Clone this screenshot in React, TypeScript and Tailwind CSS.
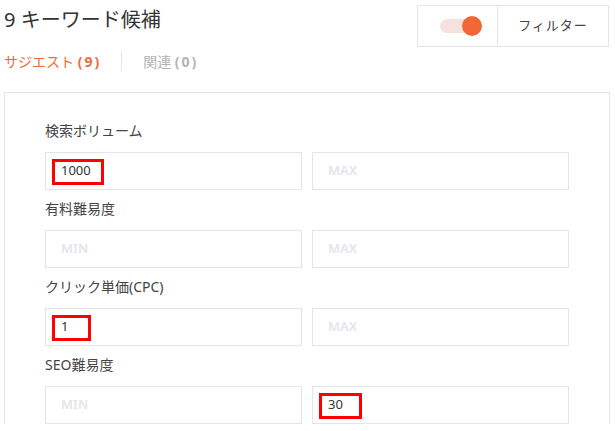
const fields = [
  { label: '検索ボリューム', min: { value: '1000', box: 'w-[52px]' }, max: null },
  { label: '有料難易度', min: null, max: null },
  { label: 'クリック単価(CPC)', min: { value: '1', box: 'w-[39px]' }, max: null },
  { label: 'SEO難易度', min: null, max: { value: '30', box: 'w-[43px]' } },
]

type Filled = { value: string; box: string } | null

function RangeInput({ placeholder, filled }: { placeholder: string; filled: Filled }) {
  return (
    <div className="relative flex h-[38px] items-center border border-[#e4e5ea] bg-white px-[15px] text-[13px]">
      {filled ? (
        <>
          <span className="text-[#333]">{filled.value}</span>
          <span className={`absolute left-[6px] top-[6px] h-[26px] border-[3px] border-[#ff0000] ${filled.box}`} />
        </>
      ) : (
        <span className="font-semibold text-[#e3e5ec]">{placeholder}</span>
      )}
    </div>
  )
}

export default function App() {
  return (
    <div
      className="relative h-[431px] w-[615px] overflow-hidden bg-white"
      style={{ fontFamily: '"Noto Sans", "Noto Sans CJK JP", sans-serif' }}
    >
      <div className="flex items-start justify-between">
        <h1 className="ml-[4px] mt-[6px] text-[20px] leading-[28px] text-[#333]">9 キーワード候補</h1>
        <div className="mr-[6px] mt-[5px] flex h-[42px] w-[192px] border border-[#e4e5ea]">
          <div className="flex w-[80px] items-center border-r border-[#e4e5ea] pl-[22px]">
            <div className="relative h-[14px] w-[38px] rounded-full bg-[#f6e2dd]">
              <span className="absolute right-[-4px] top-[-3px] h-[20px] w-[20px] rounded-full bg-[#f26635]" />
            </div>
          </div>
          <div className="flex flex-1 items-center justify-center text-[13px] tracking-[1px] text-[#444]">
            フィルター
          </div>
        </div>
      </div>

      <div className="ml-[4px] mt-[4px] flex h-[20px] items-center text-[14px]">
        <span className="text-[#ef6b3d]">
          サジエスト <span className="font-bold tracking-[2px]">(9)</span>
        </span>
        <span className="ml-[20px] mr-[21px] h-[20px] w-px bg-[#e4e5ea]" />
        <span className="text-[#b4b4b4]">
          関連 <span className="font-bold tracking-[2px]">(0)</span>
        </span>
      </div>

      <div className="ml-[4px] mr-[5px] mt-[21px] border-l border-r border-t border-[#e4e5ea] pl-[40px] pr-[40px] pt-[19px]">
        {fields.map((f) => (
          <div key={f.label}>
            <div className="flex h-[40px] items-center pb-[4px] text-[14px] text-[#444]">{f.label}</div>
            <div className="grid grid-cols-2 gap-[10px]">
              <RangeInput placeholder="MIN" filled={f.min} />
              <RangeInput placeholder="MAX" filled={f.max} />
            </div>
          </div>
        ))}
      </div>
    </div>
  )
}
